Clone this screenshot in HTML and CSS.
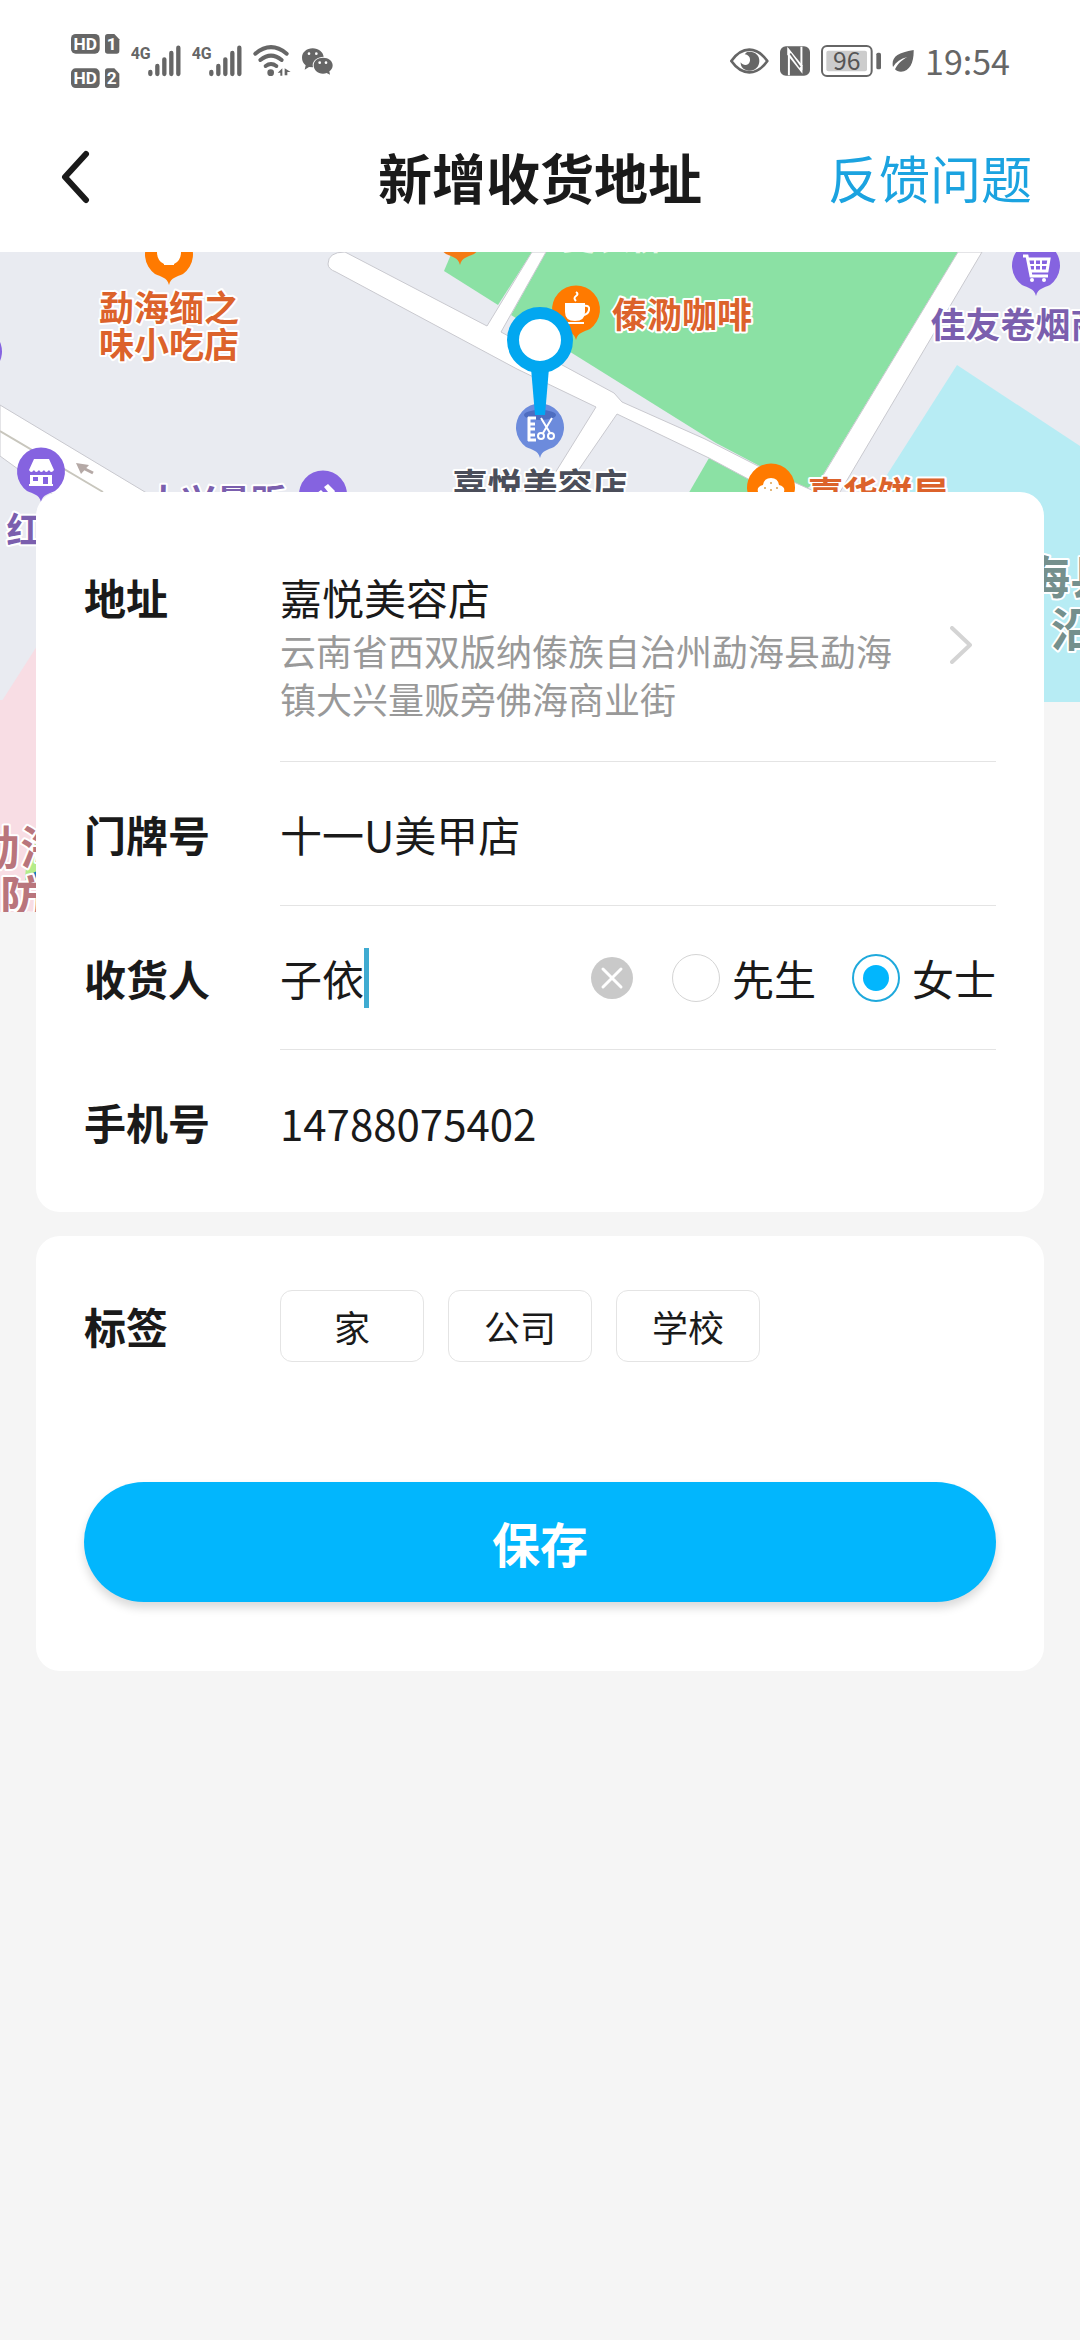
FILE: index.html
```html
<!DOCTYPE html>
<html lang="zh-CN">
<head>
    <meta charset="UTF-8">
    <meta name="viewport" content="width=device-width, initial-scale=1.0">
    <title>新增收货地址</title>
    <link rel="stylesheet" href="styles.css">
</head>
<body>
    <div class="status">
        <div class="status-group">
            <svg width="49" height="54" viewBox="93 43 147 162">
                <g fill="#666">
                    <rect x="93" y="43" width="86" height="59" rx="14"/>
                    <path d="M203 43h20l15 16v35q0 8-8 8h-27q-8 0-8-8V51q0-8 8-8z"/>
                    <rect x="93" y="146" width="86" height="59" rx="14"/>
                    <path d="M203 146h20l15 16v35q0 8-8 8h-27q-8 0-8-8v-43q0-8 8-8z"/>
                </g>
                <g class="hd-text">
                    <text x="136" y="91">HD</text>
                    <text x="215" y="91">1</text>
                    <text x="136" y="194">HD</text>
                    <text x="215" y="194">2</text>
                </g>
            </svg>
            <svg width="50" height="32" viewBox="272 75 150 96">
                <text class="net-text" x="271" y="117">4G</text>
                <path d="M330 156v6M351 138v24M372 118v44M393 99v63M414 83v79" stroke="#666" stroke-width="13" stroke-linecap="round"/>
            </svg>
            <svg width="50" height="32" viewBox="272 75 150 96">
                <text class="net-text" x="271" y="117">4G</text>
                <path d="M330 156v6M351 138v24M372 118v44M393 99v63M414 83v79" stroke="#666" stroke-width="13" stroke-linecap="round"/>
            </svg>
            <svg width="38" height="32" viewBox="634 75 114 96">
                <g fill="none" stroke="#666" stroke-width="12" stroke-linecap="round">
                    <path d="M641 101Q688 62 735 101"/>
                    <path d="M656 120Q688 94 720 120"/>
                    <path d="M672 138Q688 126 704 138"/>
                </g>
                <circle cx="687" cy="158" r="10" fill="#666"/>
                <path d="M722 145v22h-6v-9h-8zM729 145l18 11h-10v10h-8z" fill="#666"/>
            </svg>
            <svg width="31" height="27" viewBox="770 82 93 81">
                <path d="M802 83c18 0 31 11 33 25-18 0-33 11-33 26l1 6-12-1-13 8 3-13c-7-6-11-13-11-23 0-16 14-28 32-28z" fill="#666"/>
                <path d="M833 111c17 0 29 10 29 23 0 8-4 14-10 18l2 10-10-5q-5 2-11 2c-16 0-28-11-28-25s12-23 28-23z" fill="#666"/>
                <g fill="#fff"><circle cx="791" cy="99" r="4"/><circle cx="813" cy="99" r="4"/><circle cx="823" cy="126" r="4"/><circle cx="842" cy="126" r="4"/></g>
            </svg>
        </div>
        <div class="status-group">
            <svg width="39" height="26" viewBox="100 84 117 78">
                <path d="M104 123q24-34 54-34t54 34q-24 34-54 34t-54-34z" fill="none" stroke="#666" stroke-width="8" stroke-linejoin="round"/>
                <path d="M151 96c20-5 38 8 37 27 0 19-16 31-32 29-15-1-25-12-24-25 8 12 26 10 28-5 1-10-4-17-16-19z" fill="#666"/>
            </svg>
            <svg width="30" height="30" viewBox="249 78 91 90">
                <rect x="249" y="78" width="91" height="90" rx="18" fill="#666"/>
                <path d="M276 166V92l38 50V80" fill="none" stroke="#fff" stroke-width="6"/>
                <path d="M271 80l46 56v26l-46-58z" fill="#fff"/>
                <path d="M280 100l30 42" stroke="#666" stroke-width="5"/>
            </svg>
            <svg width="60" height="32" viewBox="377 76 180 96">
                <rect x="380" y="79" width="149" height="90" rx="15" fill="#fff" stroke="#666" stroke-width="6"/>
                <rect x="393" y="93" width="122" height="62" rx="6" fill="#ccc"/>
                <rect x="543" y="99" width="14" height="50" rx="5" fill="#666"/>
                <text class="battery-text" x="454" y="152">96</text>
            </svg>
            <svg width="22" height="22" viewBox="583 92 66 66">
                <path d="M648 92c1 36-11 65-38 65-8 0-14-2-18-7 10-19 22-29 37-37-20 5-34 15-43 30-6-27 10-43 62-51z" fill="#666"/>
            </svg>
            <span class="time">19:54</span>
        </div>
    </div>

    <header class="nav">
        <a class="back" href="#" aria-label="返回">
            <svg width="30" height="54" viewBox="0 0 30 54"><path d="M26 4L5 27l21 23" fill="none" stroke="#1a1a1a" stroke-width="6" stroke-linecap="round" stroke-linejoin="round"/></svg>
        </a>
        <h1>新增收货地址</h1>
        <a class="feedback" href="#">反馈问题</a>
    </header>

    <svg class="map" viewBox="0 252 1080 660" preserveAspectRatio="xMidYMin slice">
        <defs>
            <path id="pin" d="M0 29C-2 21-8 21-14 18A24 24 0 1 1 14 18C8 21 2 21 0 29z"/>
        </defs>
        <rect x="0" y="252" width="1080" height="450" fill="#e9ebf1"/>
        <rect x="0" y="700" width="60" height="212" fill="#f8dde4"/>
        <path d="M0 704L60 610V720H0z" fill="#f8dde4"/>
        <!-- parks and water -->
        <g fill="#8be1a4">
            <path d="M452 252l-8 19 54 34 34-53z"/>
            <path d="M546 252l-35 63 205 128 89 47 16-12 137-226z"/>
            <path d="M709 458l-22 38h130z"/>
        </g>
        <path d="M957 365L876 492V702h204V446z" fill="#b7ecf4"/>
        <!-- roads -->
        <g fill="#fff" stroke="#c9c9cf" stroke-width="1">
            <path d="M0 405l160 96H62L0 456z"/>
            <path d="M958 252L813 492h27L982 252z"/>
            <path d="M345 252Q328 252 328 264Q328 269 336 272L517 369L596 407L542 494H562L617 414L709 458L780 496H825L760 467L705 439L622 402L614 393L501 332L546 252H532L487 326z"/>
        </g>
        <path d="M0 431l103 61" stroke="#c8c6bd" stroke-width="2"/>
        <path d="M93 473l-10-5" stroke="#b5a9a6" stroke-width="3"/>
        <path d="M76 463l13 2-8 9z" fill="#b5a9a6"/>

        <!-- places -->
        <use href="#pin" x="460" y="236" fill="#f47b15"/>
        <use href="#pin" x="169" y="256" fill="#ff7a00"/>
        <path d="M157 252h24q0 9-7 12v1h-10v-1q-7-3-7-12z" fill="#fff"/>
        <use href="#pin" x="576" y="311" fill="#ff7a00"/>
        <g fill="none" stroke="#fff" stroke-width="2">
            <path d="M566 304h18v8q0 8-9 8t-9-8z" fill="#fff"/>
            <path d="M584 306q6-1 5 4t-7 5M566 323h18M576 301q-3-3 0-5t0-4"/>
        </g>
        <use href="#pin" x="-22" y="353" fill="#8563e0"/>
        <use href="#pin" x="41" y="473" fill="#8563e0"/>
        <g fill="#fff">
            <path d="M34 459h15l5 11q-3 4-5 0-3 4-5 0-3 4-5 0-3 4-5 0-3 4-5 0z"/>
            <path d="M30 475h22v11H30zM29 484h24v2H29z"/>
            <path d="M33 477h5v4h-5zM43 477h5v7h-5z" fill="#8563e0"/>
        </g>
        <use href="#pin" x="323" y="496" fill="#8563e0"/>
        <path d="M313 496l8-6 5 5zM324 487l4-3 7 7-3 6z" fill="#fff"/>
        <use href="#pin" x="1036" y="267" fill="#8563e0"/>
        <g fill="none" stroke="#fff" stroke-width="3">
            <path d="M1023 256h4l4 20h17M1028 259h21l-2 12h-17"/>
            <path d="M1035 259v12M1041 259v12M1029 265h19" stroke-width="2"/>
        </g>
        <circle cx="1032" cy="280" r="2" fill="#fff"/>
        <circle cx="1044" cy="280" r="2" fill="#fff"/>
        <use href="#pin" x="771" y="489" fill="#ff7a00"/>
        <path d="M759 494q-4-7 4-9 1-7 8-7t8 7q8 2 4 9z" fill="#fff"/>
        <g fill="#d8a050"><circle cx="765" cy="488" r="1"/><circle cx="771" cy="483" r="1"/><circle cx="777" cy="488" r="1"/><circle cx="771" cy="490" r="1"/></g>

        <g class="place orange">
            <text x="169" y="321">勐海缅之</text>
            <text x="169" y="358">味小吃店</text>
            <text x="682" y="328">傣泐咖啡</text>
            <text x="878" y="507">嘉华饼屋</text>
        </g>
        <g class="place purple">
            <text x="1018" y="338">佳友卷烟商</text>
            <text x="216" y="515">大兴量贩</text>
            <text x="24" y="543">红</text>
        </g>
        <text class="place park" x="596" y="250">上曼农佛</text>
        <text class="place dark" x="540" y="499">嘉悦美容店</text>
        <g class="place large teal">
            <text x="1024" y="594">海县</text>
            <text x="1051" y="646">沿</text>
        </g>
        <path d="M27 850q6-6 14-8v38H25z" fill="#b5ec8a"/>
        <path d="M29 875l8-4v8z" fill="#1677c0"/>
        <g class="place large maroon">
            <text x="-26" y="864">勐海</text>
            <text x="0" y="914">防</text>
        </g>

        <!-- current position -->
        <use href="#pin" x="540" y="429" fill="#6c8bdc"/>
        <ellipse cx="540" cy="415" rx="16" ry="5" fill="#4e6dc0"/>
        <g fill="none" stroke="#fff" stroke-width="2">
            <path d="M529 417v24M528 418h8M528 424h7M528 429h7M528 435h7M528 440h8" stroke-width="3"/>
            <path d="M541 418l9 15M552 418l-9 15"/>
            <circle cx="541" cy="436" r="3"/>
            <circle cx="551" cy="436" r="3"/>
        </g>
        <path d="M531 368h18l-4 47h-10z" fill="#02a7f3"/>
        <circle cx="540" cy="340" r="27" fill="#fff" stroke="#02a7f0" stroke-width="12"/>
    </svg>

    <form class="form">
        <section class="card">
            <div class="row address">
                <span class="label" id="address-label">地址</span>
                <button type="button" class="pick" aria-describedby="address-label">
                    <span class="pick-text">
                        <span class="pick-name">嘉悦美容店</span>
                        <span class="pick-detail">云南省西双版纳傣族自治州勐海县勐海镇大兴量贩旁佛海商业街</span>
                    </span>
                    <svg width="22" height="38" viewBox="0 0 22 38"><path d="M2 2l18 17L2 36" fill="none" stroke="#d4d4d4" stroke-width="4" stroke-linecap="round" stroke-linejoin="round"/></svg>
                </button>
            </div>
            <div class="row">
                <label class="label" for="door">门牌号</label>
                <div class="field"><input class="text" type="text" id="door" value="十一U美甲店"></div>
            </div>
            <div class="row">
                <label class="label" for="name">收货人</label>
                <div class="field">
                    <div class="name">
                        <input class="text name-input" type="text" id="name" value="子依">
                        <span class="caret"></span>
                    </div>
                    <button type="button" class="clear" aria-label="清除">
                        <svg width="42" height="42" viewBox="0 0 42 42"><circle cx="21" cy="21" r="21" fill="#c9c9c9"/><path d="M12 12l18 18M30 12L12 30" stroke="#fff" stroke-width="3" stroke-linecap="round"/></svg>
                    </button>
                    <div class="gender">
                        <label><input type="radio" name="gender">先生</label>
                        <label><input type="radio" name="gender" checked>女士</label>
                    </div>
                </div>
            </div>
            <div class="row">
                <label class="label" for="phone">手机号</label>
                <div class="field"><input class="text" type="tel" id="phone" value="14788075402"></div>
            </div>
        </section>

        <section class="card card-tags">
            <div class="tags-row">
                <span class="label">标签</span>
                <div class="tags">
                    <button type="button" class="tag">家</button>
                    <button type="button" class="tag">公司</button>
                    <button type="button" class="tag">学校</button>
                </div>
            </div>
            <button type="submit" class="save">保存</button>
        </section>
    </form>
</body>
</html>
```
FILE: styles.css
```css
*{
    box-sizing: border-box;
}
body{
    margin: 0;
    background: #f5f5f5;
    color: #1a1a1a;
    font-family: "Noto Sans CJK SC", sans-serif;
    font-size: 42px;
}
a{
    text-decoration: none;
}
button, input{
    font-family: inherit;
    font-size: inherit;
    color: inherit;
    margin: 0;
    padding: 0;
    border: 0;
    background: none;
}
svg{
    display: block;
    flex: none;
}

/* status bar */
.status{
    display: flex;
    justify-content: space-between;
    align-items: center;
    height: 108px;
    padding: 14px 70px 0 71px;
    background: #fff;
}
.status-group{
    display: flex;
    align-items: center;
    gap: 11px;
}
.hd-text{
    font: bold 52px Roboto, sans-serif;
    fill: #fff;
    text-anchor: middle;
}
.net-text{
    font: bold 48px Roboto, sans-serif;
    fill: #666;
}
.battery-text{
    font: 74px "Noto Sans CJK SC", sans-serif;
    fill: #555;
    text-anchor: middle;
}
.time{
    font-size: 34px;
    line-height: 40px;
    color: #666;
}

/* title bar */
.nav{
    display: grid;
    grid-template-columns: 1fr auto 1fr;
    align-items: center;
    height: 144px;
    padding: 0 48px 6px;
    background: #fff;
}
.nav h1{
    margin: 0;
    font-size: 54px;
    line-height: 72px;
}
.back{
    justify-self: start;
    padding-left: 12px;
}
.feedback{
    justify-self: end;
    font-size: 51px;
    line-height: 72px;
    color: #1ba3e0;
}

/* map */
.map{
    width: 100%;
    height: 660px;
}
.place{
    font-size: 35px;
    font-weight: bold;
    text-anchor: middle;
    stroke: #fff;
    stroke-width: 4px;
    stroke-linejoin: round;
    paint-order: stroke;
}
.orange{
    fill: #dc622b;
}
.purple{
    fill: #7b5fae;
}
.dark{
    fill: #4b4e5a;
}
.park{
    fill: #e4fae4;
    stroke: none;
}
.large{
    font-size: 46px;
    text-anchor: start;
}
.teal{
    fill: #75908d;
}
.maroon{
    fill: #b9757c;
}

/* form */
.form{
    display: flex;
    flex-direction: column;
    gap: 24px;
    position: relative;
    margin-top: -420px;
    padding: 0 36px;
}
.card{
    padding: 0 48px 18px;
    border-radius: 24px;
    background: #fff;
}
.row{
    display: flex;
    align-items: center;
}
.label{
    flex: none;
    width: 196px;
    font-weight: bold;
    line-height: 58px;
}
.field{
    display: flex;
    flex: 1;
    align-items: center;
    min-width: 0;
    height: 144px;
    border-bottom: 1px solid #e4e4e4;
}
.row:last-child .field{
    border-bottom: 0;
}
.text{
    flex: 1;
    min-width: 0;
    height: 60px;
    outline: 0;
}
.address{
    align-items: flex-start;
}
.address .label{
    padding-top: 76px;
}
.pick{
    display: flex;
    flex: 1;
    align-items: center;
    justify-content: space-between;
    gap: 56px;
    padding: 76px 24px 39px 0;
    border-bottom: 1px solid #e4e4e4;
    text-align: left;
}
.pick-name{
    display: block;
    line-height: 58px;
}
.pick-detail{
    display: block;
    font-size: 36px;
    line-height: 48px;
    color: #999;
}
.name{
    display: flex;
    flex: 1;
    align-items: center;
}
.name-input{
    flex: none;
    width: 2em;
    field-sizing: content;
}
.caret{
    width: 5px;
    height: 60px;
    background: #3fabd1;
}
.clear{
    margin-right: 39px;
}
.gender{
    display: flex;
    gap: 36px;
}
.gender label{
    display: flex;
    align-items: center;
    gap: 12px;
}
.gender input{
    appearance: none;
    display: grid;
    place-items: center;
    width: 48px;
    height: 48px;
    border: 1px solid #d4d4d4;
    border-radius: 50%;
}
.gender input:checked{
    border: 2px solid #1fa9dc;
}
.gender input:checked::before{
    content: "";
    width: 26px;
    height: 26px;
    border-radius: 50%;
    background: #02b6fd;
}

/* tags and save */
.card-tags{
    padding: 54px 48px 69px;
}
.tags-row{
    display: flex;
    align-items: center;
}
.tags{
    display: flex;
    flex-wrap: wrap;
    gap: 24px;
}
.tag{
    width: 144px;
    height: 72px;
    border: 1px solid #e4e4e4;
    border-radius: 12px;
    font-size: 36px;
}
.save{
    display: block;
    width: 100%;
    height: 120px;
    margin-top: 120px;
    border-radius: 60px;
    background: #02b6fd;
    box-shadow: 0 6px 10px rgba(0, 0, 0, 0.15);
    color: #fff;
    font-size: 48px;
    font-weight: bold;
}
```
